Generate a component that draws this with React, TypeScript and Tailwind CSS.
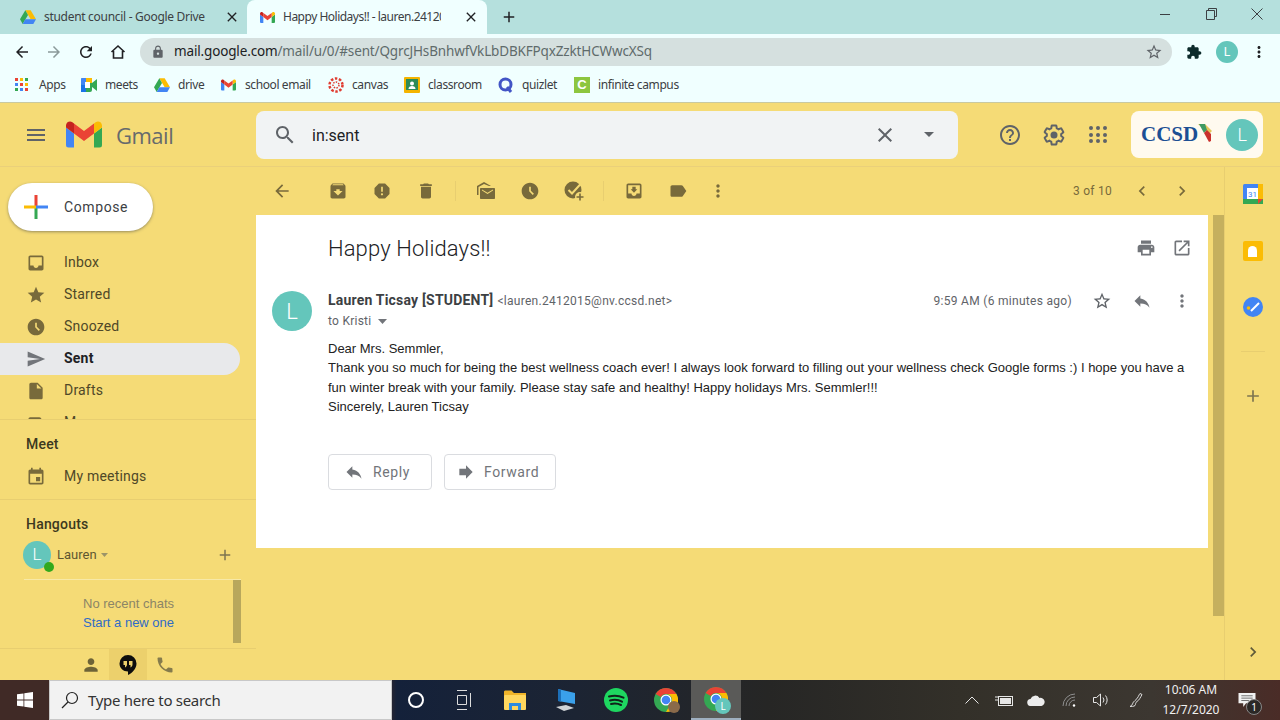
import type { ReactNode } from "react";

const P = {
  archive: "M20.54 5.23l-1.39-1.68C18.88 3.21 18.47 3 18 3H6c-.47 0-.88.21-1.16.55L3.46 5.23C3.17 5.57 3 6.02 3 6.5V19c0 1.1.9 2 2 2h14c1.1 0 2-.9 2-2V6.5c0-.48-.17-.93-.46-1.27zM12 17.5L6.5 12H10v-2h4v2h3.5L12 17.5zM5.12 5l.81-1h12l.94 1H5.12z",
  report: "M15.73 3H8.27L3 8.27v7.46L8.27 21h7.46L21 15.73V8.27L15.73 3zM12 17.3c-.72 0-1.3-.58-1.3-1.3 0-.72.58-1.3 1.3-1.3.72 0 1.3.58 1.3 1.3 0 .72-.58 1.3-1.3 1.3zm1-4.3h-2V7h2v6z",
  trash: "M6 19c0 1.1.9 2 2 2h8c1.1 0 2-.9 2-2V7H6v12zM19 4h-3.5l-1-1h-5l-1 1H5v2h14V4z",
  clock: "M11.99 2C6.47 2 2 6.48 2 12s4.47 10 9.99 10C17.52 22 22 17.52 22 12S17.52 2 11.99 2zm3.3 14.71L11 12.41V7h2v4.59l3.71 3.71-1.42 1.41z",
  moveInbox: "M19 3H5c-1.1 0-2 .9-2 2v14c0 1.1.9 2 2 2h14c1.1 0 2-.9 2-2V5c0-1.1-.9-2-2-2zm0 12h-4c0 1.66-1.35 3-3 3s-3-1.34-3-3H5V5h14v10zm-3-5h-2V7h-4v3H8l4 4 4-4z",
  label: "M17.63 5.84C17.27 5.33 16.67 5 16 5L5 5.01C3.9 5.01 3 5.9 3 7v10c0 1.1.9 1.99 2 1.99L16 19c.67 0 1.27-.33 1.63-.84L22 12l-4.37-6.16z",
  inbox: "M19 3H5c-1.1 0-2 .9-2 2v14c0 1.1.9 2 2 2h14c1.1 0 2-.9 2-2V5c0-1.1-.9-2-2-2zm0 12h-4c0 1.66-1.35 3-3 3s-3-1.34-3-3H5V5h14v10z",
  star: "M12 17.27L18.18 21l-1.64-7.03L22 9.24l-7.19-.61L12 2 9.19 8.63 2 9.24l5.46 4.73L5.82 21z",
  starBorder: "M22 9.24l-7.19-.62L12 2 9.19 8.63 2 9.24l5.46 4.73L5.82 21 12 17.27 18.18 21l-1.63-7.03L22 9.24zM12 15.4l-3.76 2.27 1-4.28-3.32-2.88 4.38-.38L12 6.1l1.71 4.04 4.38.38-3.32 2.88 1 4.28L12 15.4z",
  send: "M2.01 21L23 12 2.01 3 2 10l15 2-15 2z",
  file: "M6 2c-1.1 0-1.99.9-1.99 2L4 20c0 1.1.89 2 1.99 2H18c1.1 0 2-.9 2-2V8l-6-6H6zm7 7V3.5L18.5 9H13z",
  reply: "M10 9V5l-7 7 7 7v-4.1c5 0 8.5 1.6 11 5.1-1-5-4-10-11-11z",
  forward: "M12 8V4l8 8-8 8v-4H4V8z",
  print: "M19 8H5c-1.66 0-3 1.34-3 3v6h4v4h12v-4h4v-6c0-1.66-1.34-3-3-3zm-3 11H8v-5h8v5zm3-7c-.55 0-1-.45-1-1s.45-1 1-1 1 .45 1 1-.45 1-1 1zm-1-9H6v4h12V3z",
  openNew: "M19 19H5V5h7V3H5c-1.11 0-2 .9-2 2v14c0 1.1.89 2 2 2h14c1.1 0 2-.9 2-2v-7h-2v7zM14 3v2h3.59l-9.83 9.83 1.41 1.41L19 6.41V10h2V3h-7z",
  help: "M11 18h2v-2h-2v2zm1-16C6.48 2 2 6.48 2 12s4.48 10 10 10 10-4.48 10-10S17.52 2 12 2zm0 18c-4.41 0-8-3.59-8-8s3.59-8 8-8 8 3.59 8 8-3.59 8-8 8zm0-14c-2.21 0-4 1.79-4 4h2c0-1.1.9-2 2-2s2 .9 2 2c0 2-3 1.75-3 5h2c0-2.25 3-2.5 3-5 0-2.21-1.79-4-4-4z",
  search: "M15.5 14h-.79l-.28-.27C15.41 12.59 16 11.11 16 9.5 16 5.91 13.09 3 9.5 3S3 5.91 3 9.5 5.91 16 9.5 16c1.61 0 3.09-.59 4.23-1.57l.27.28v.79l5 4.99L20.49 19l-4.99-5zm-6 0C7.01 14 5 11.99 5 9.5S7.01 5 9.5 5 14 7.01 14 9.5 11.99 14 9.5 14z",
  event: "M17 12h-5v5h5v-5zM16 1v2H8V1H6v2H5c-1.11 0-1.99.9-1.99 2L3 19c0 1.1.89 2 2 2h14c1.1 0 2-.9 2-2V5c0-1.1-.9-2-2-2h-1V1h-2zm3 18H5V8h14v11z",
  person: "M12 12c2.21 0 4-1.79 4-4s-1.79-4-4-4-4 1.79-4 4 1.79 4 4 4zm0 2c-2.67 0-8 1.34-8 4v2h16v-2c0-2.66-5.33-4-8-4z",
  phone: "M6.62 10.79c1.44 2.83 3.76 5.14 6.59 6.59l2.2-2.2c.27-.27.67-.36 1.02-.24 1.12.37 2.33.57 3.57.57.55 0 1 .45 1 1V20c0 .55-.45 1-1 1-9.39 0-17-7.61-17-17 0-.55.45-1 1-1h3.5c.55 0 1 .45 1 1 0 1.25.2 2.45.57 3.57.11.35.03.74-.25 1.02l-2.2 2.2z",
  extension: "M20.5 11H19V7c0-1.1-.9-2-2-2h-4V3.5C13 2.12 11.88 1 10.5 1S8 2.12 8 3.5V5H4c-1.1 0-1.99.9-1.99 2v3.8H3.5c1.49 0 2.7 1.21 2.7 2.7s-1.21 2.7-2.7 2.7H2V20c0 1.1.9 2 2 2h3.8v-1.5c0-1.49 1.21-2.7 2.7-2.7 1.49 0 2.7 1.21 2.7 2.7V22H17c1.1 0 2-.9 2-2v-4h1.5c1.38 0 2.5-1.12 2.5-2.5S21.88 11 20.5 11z",
  lock: "M18 8h-1V6c0-2.76-2.24-5-5-5S7 3.24 7 6v2H6c-1.1 0-2 .9-2 2v10c0 1.1.9 2 2 2h12c1.1 0 2-.9 2-2V10c0-1.1-.9-2-2-2zm-6 9c-1.1 0-2-.9-2-2s.9-2 2-2 2 .9 2 2-.9 2-2 2zm3.1-9H8.9V6c0-1.71 1.39-3.1 3.1-3.1 1.71 0 3.1 1.39 3.1 3.1v2z",
  more: "M12 8c1.1 0 2-.9 2-2s-.9-2-2-2-2 .9-2 2 .9 2 2 2zm0 2c-1.1 0-2 .9-2 2s.9 2 2 2 2-.9 2-2-.9-2-2-2zm0 6c-1.1 0-2 .9-2 2s.9 2 2 2 2-.9 2-2-.9-2-2-2z",
  back: "M20 11H7.83l5.59-5.59L12 4l-8 8 8 8 1.41-1.41L7.83 13H20v-2z",
  close: "M19 6.41L17.59 5 12 10.59 6.41 5 5 6.41 10.59 12 5 17.59 6.41 19 12 13.41 17.59 19 19 17.59 13.41 12z",
  chevL: "M15.41 7.41L14 6l-6 6 6 6 1.41-1.41L10.83 12z",
  chevR: "M10 6L8.59 7.41 13.17 12l-4.58 4.59L10 18l6-6z",
  plus: "M19 13h-6v6h-2v-6H5v-2h6V5h2v6h6v2z",
  menu: "M3 18h18v-2H3v2zm0-5h18v-2H3v2zm0-7v2h18V6H3z",
  refresh: "M17.65 6.35C16.2 4.9 14.21 4 12 4c-4.42 0-7.99 3.58-7.99 8s3.57 8 7.99 8c3.73 0 6.84-2.55 7.73-6h-2.08c-.82 2.33-3.04 4-5.65 4-3.31 0-6-2.69-6-6s2.69-6 6-6c1.66 0 3.14.69 4.22 1.78L13 11h7V4l-2.35 2.35z",
};

function Mi({ d, size = 24, className = "" }: { d: string; size?: number; className?: string }) {
  return (
    <svg width={size} height={size} viewBox="0 0 24 24" fill="currentColor" className={`shrink-0 ${className}`}>
      <path d={d} />
    </svg>
  );
}

function GmailLogo({ w = 16, h = 12 }: { w?: number; h?: number }) {
  return (
    <svg width={w} height={h} viewBox="0 0 36 26" className="shrink-0">
      <path d="M2.5 26H8V12L0 6v17.5A2.5 2.5 0 0 0 2.5 26z" fill="#4285f4" />
      <path d="M28 26h5.500A2.500 2.500 0 0 0 36 23.500V6l-8 6z" fill="#34a853" />
      <path d="M28 2v10l8-6V4c0-3.300-3.800-5.200-6.400-3.200z" fill="#fbbc04" />
      <path d="M8 12V2l10 7.500L28 2v10l-10 7.500z" fill="#ea4335" />
      <path d="M0 4v2l8 6V2L6.400.800C3.800-1.200 0 .700 0 4z" fill="#c5221f" />
    </svg>
  );
}

function DriveLogo({ size = 16 }: { size?: number }) {
  return (
    <svg width={size} height={size} viewBox="0 0 24 22" className="shrink-0">
      <path d="M8 1h8l8 13.500h-8z" fill="#fbbc04" />
      <path d="M8 1L0 14.500 4 21.500 12 8z" fill="#34a853" />
      <path d="M8 14.500h16l-4 7H4z" fill="#4285f4" />
    </svg>
  );
}

function ChromeLogo({ size = 24 }: { size?: number }) {
  return (
    <svg width={size} height={size} viewBox="0 0 24 24" className="shrink-0">
      <circle cx="12" cy="12" r="12" fill="#34a853" />
      <path d="M12 0a12 12 0 0 1 10.400 6H12a6 6 0 0 0-5.200 3L1.600 6A12 12 0 0 1 12 0z" fill="#ea4335" />
      <path d="M22.400 6A12 12 0 0 1 12 24l5.200-9A6 6 0 0 0 12 6z" fill="#fbbc04" />
      <circle cx="12" cy="12" r="5.500" fill="#fff" />
      <circle cx="12" cy="12" r="4.300" fill="#4285f4" />
    </svg>
  );
}

function Bookmark({ icon, label, width }: { icon: ReactNode; label: string; width: string }) {
  return (
    <div className={`flex items-center shrink-0 ${width}`}>
      <span className="w-6 flex justify-start">{icon}</span>
      <span className="text-[12px] text-[#3c4043] whitespace-nowrap tracking-[-0.4px]">{label}</span>
    </div>
  );
}

function TabBar() {
  return (
    <div className="h-[34px] bg-[#b5e0dd] flex items-stretch shrink-0 font-['Noto_Sans',sans-serif]">
      <div className="w-[247px] flex items-center pl-[20px]">
        <DriveLogo />
        <span className="ml-2 text-[12px] text-[#3c4043] whitespace-nowrap tracking-[-0.3px]">student council - Google Drive</span>
        <Mi d={P.close} size={16} className="ml-auto mr-[7px] text-[#202124]" />
      </div>
      <div className="w-[240px] bg-[#f0ffff] rounded-t-[8px] flex items-center pl-[13px]">
        <GmailLogo w={15} h={11} />
        <span className="ml-2 w-[158px] overflow-hidden text-[12px] text-[#3c4043] whitespace-nowrap tracking-[-0.5px]">Happy Holidays!! - lauren.241201</span>
        <Mi d={P.close} size={16} className="ml-auto mr-2 text-[#202124]" />
      </div>
      <div className="flex items-center ml-[13px]">
        <Mi d={P.plus} size={18} className="text-[#202124]" />
      </div>
      <div className="ml-auto flex items-center pb-[6px] text-[#3c4043]">
        <div className="w-[46px] flex justify-center">
          <div className="w-[10px] h-px bg-[#3c4043]" />
        </div>
        <div className="w-[46px] flex justify-center">
          <svg width="11" height="12" viewBox="0 0 11 12" fill="none" stroke="#3c4043">
            <path d="M2.500 2.500V.500h8v8h-2M.500 2.500h8v9h-8z" />
          </svg>
        </div>
        <div className="w-[46px] flex justify-center">
          <svg width="12" height="12" viewBox="0 0 12 12" fill="none" stroke="#3c4043">
            <path d="M.500.500l11 11M11.500.500l-11 11" />
          </svg>
        </div>
      </div>
    </div>
  );
}

function AddressBar() {
  return (
    <div className="h-[36px] bg-[#f0ffff] flex items-center shrink-0 font-['Noto_Sans',sans-serif]">
      <div className="w-[140px] flex items-center text-[#202124]">
        <div className="w-[44px] flex justify-center"><Mi d={P.back} size={18} /></div>
        <div className="w-[20px] flex justify-center"><Mi d="M4 13h12.170l-5.590 5.590L12 20l8-8-8-8-1.410 1.410L16.170 11H4z" size={18} className="text-[#8b9a9a]" /></div>
        <div className="w-[44px] flex justify-center"><Mi d={P.refresh} size={18} /></div>
        <div className="w-[20px] flex justify-center">
          <svg width="16" height="16" viewBox="0 0 16 16" fill="none" stroke="#202124" strokeWidth="1.600">
            <path d="M1.500 8L8 2l6.500 6M3.500 7v7h9V7" />
          </svg>
        </div>
      </div>
      <div className="w-[1032px] h-[28px] bg-[#d5e0df] rounded-full flex items-center pl-[11px] pr-[9px]">
        <Mi d={P.lock} size={14} className="text-[#5f6368]" />
        <span className="ml-[9px] -mt-[1px] text-[13.5px] text-[#5f6b6b] whitespace-nowrap tracking-[-0.15px]">
          <span className="text-[#202124]">mail.google.com</span>/mail/u/0/#sent/QgrcJHsBnhwfVkLbDBKFPqxZzktHCWwcXSq
        </span>
        <Mi d={P.starBorder} size={18} className="ml-auto text-[#5f6368]" />
      </div>
      <Mi d={P.extension} size={16} className="ml-[14px] text-[#0c2b2b]" />
      <div className="ml-[14px] w-[22px] h-[22px] rounded-full bg-[#64c6bb] text-white text-[13px] flex items-center justify-center">L</div>
      <Mi d={P.more} size={18} className="ml-[12px] text-[#202124]" />
    </div>
  );
}

function BookmarksBar() {
  const dots = ["#ea4335", "#fbbc04", "#34a853", "#4285f4", "#ea4335", "#fbbc04", "#34a853", "#4285f4", "#ea4335"];
  return (
    <div className="h-[33px] bg-[#f0ffff] border-b border-[#c9c9a0] flex items-center pl-[15px] pb-[3px] shrink-0 font-['Noto_Sans',sans-serif]">
      <Bookmark
        width="w-[66px]"
        label="Apps"
        icon={
          <span className="grid grid-cols-3 gap-[2px]">
            {dots.map((c, i) => (
              <span key={i} className="w-[3px] h-[3px]" style={{ background: c }} />
            ))}
          </span>
        }
      />
      <Bookmark
        width="w-[73px]"
        label="meets"
        icon={
          <svg width="16" height="14" viewBox="0 0 16 14">
            <rect width="11" height="14" rx="2" fill="#34a853" />
            <rect width="6" height="7" rx="1" fill="#4285f4" />
            <rect y="7" width="5" height="7" fill="#1a73e8" />
            <rect x="5" y="0" width="6" height="5" fill="#fbbc04" />
            <rect x="4" y="4" width="5" height="6" fill="#fff" />
            <path d="M11 5l5-4v12l-5-4z" fill="#34a853" />
          </svg>
        }
      />
      <Bookmark width="w-[67px]" label="drive" icon={<DriveLogo />} />
      <Bookmark width="w-[107px]" label="school email" icon={<GmailLogo w={15} h={12} />} />
      <Bookmark
        width="w-[76px]"
        label="canvas"
        icon={
          <svg width="16" height="16" viewBox="0 0 16 16" fill="none" stroke="#e03c31">
            <circle cx="8" cy="8" r="6.500" strokeWidth="2.500" strokeDasharray="2.500 1.600" />
            <circle cx="8" cy="8" r="3" strokeWidth="1.500" strokeDasharray="1.500 1.200" />
          </svg>
        }
      />
      <Bookmark
        width="w-[94px]"
        label="classroom"
        icon={
          <svg width="16" height="16" viewBox="0 0 16 16">
            <rect width="16" height="16" rx="1" fill="#f4b400" />
            <rect x="2" y="2" width="12" height="11" fill="#2e8b57" />
            <circle cx="8" cy="6.500" r="2" fill="#fff" />
            <path d="M4.500 12c0-2 1.500-3 3.500-3s3.500 1 3.500 3z" fill="#fff" />
          </svg>
        }
      />
      <Bookmark
        width="w-[76px]"
        label="quizlet"
        icon={
          <svg width="16" height="16" viewBox="0 0 16 16" fill="none" stroke="#4255c6" strokeWidth="3">
            <circle cx="7.500" cy="7.500" r="5.500" />
            <path d="M9 10l4 5" />
          </svg>
        }
      />
      <Bookmark
        width="w-[120px]"
        label="infinite campus"
        icon={
          <span className="w-4 h-4 bg-[#8dc63f] text-white text-[13px] font-bold leading-4 text-center font-['Liberation_Sans',sans-serif]">C</span>
        }
      />
    </div>
  );
}

function GmailHeader() {
  return (
    <div className="h-[64px] border-b border-[#ead07a] flex items-center shrink-0">
      <div className="w-[256px] flex items-center pl-[24px]">
        <Mi d={P.menu} size={24} className="text-[#5f6368]" />
        <div className="ml-[18px]"><GmailLogo w={36} h={27} /></div>
        <span className="ml-[14px] text-[22px] text-[#666a6c] font-['Open_Sans',sans-serif] leading-none tracking-[-0.5px]">Gmail</span>
      </div>
      <div className="w-[702px] h-[48px] bg-[#f1f3f4] rounded-[8px] flex items-center pl-[17px]">
        <Mi d={P.search} size={24} className="text-[#5f6368]" />
        <span className="ml-[15px] mt-[2px] text-[16px] text-[#202124]">in:sent</span>
        <Mi d={P.close} size={24} className="ml-auto text-[#5f6368]" />
        <svg width="10" height="5" viewBox="0 0 10 5" className="ml-[27px] mr-[24px]"><path d="M0 0h10L5 5z" fill="#5f6368" /></svg>
      </div>
      <div className="ml-[40px] flex items-center text-[#5f6368]">
        <Mi d={P.help} size={24} />
        <svg width="24" height="24" viewBox="0 0 24 24" className="ml-[20px]">
          <path
            d="M19.140 12.940c.04-.3.06-.61.06-.94 0-.32-.02-.64-.07-.94l2.030-1.580c.18-.14.23-.41.12-.61l-1.920-3.320c-.12-.22-.37-.29-.59-.22l-2.390.96c-.5-.38-1.030-.7-1.620-.94l-.36-2.540c-.04-.24-.24-.41-.48-.41h-3.840c-.24 0-.43.17-.47.41l-.36 2.540c-.59.24-1.130.57-1.620.94l-2.390-.96c-.22-.08-.47 0-.59.22L2.740 8.870c-.12.21-.08.47.12.61l2.030 1.580c-.05.3-.09.63-.09.94s.02.64.07.94l-2.030 1.580c-.18.14-.23.41-.12.61l1.920 3.320c.12.22.37.29.59.22l2.390-.96c.5.38 1.030.7 1.620.94l.36 2.540c.05.24.24.41.48.41h3.840c.24 0 .44-.17.47-.41l.36-2.540c.59-.24 1.130-.56 1.620-.94l2.390.96c.22.08.47 0 .59-.22l1.920-3.320c.12-.22.07-.47-.12-.61l-2.010-1.580z"
            fill="none"
            stroke="#5f6368"
            strokeWidth="2"
          />
          <circle cx="12" cy="12" r="3.500" fill="#5f6368" />
        </svg>
        <span className="ml-[23px] w-[18px] grid grid-cols-3 gap-[2.500px]">
          {[0, 1, 2, 3, 4, 5, 6, 7, 8].map((i) => (
            <span key={i} className="w-[4px] h-[4px] rounded-full bg-[#5f6368]" />
          ))}
        </span>
      </div>
      <div className="ml-[24px] w-[132px] h-[47px] bg-[#fffaef] rounded-[8px] flex items-center pl-[10px]">
        <span className="font-['Liberation_Serif',serif] font-bold text-[21px] text-[#1c4f94] leading-none">CCSD</span>
        <svg width="14" height="20" viewBox="0 0 14 20" className="-mt-1">
          <path d="M0 1h7l7 7-3 3z" fill="#e6c65a" />
          <path d="M1 1h6l2 6-3 3z" fill="#3f9a63" />
          <path d="M6 10l3-3 4 4v7l-2 1z" fill="#c9302c" />
        </svg>
        <div className="ml-[14px] w-[32px] h-[32px] rounded-full bg-[#64c6bb] text-white text-[18px] font-light flex items-center justify-center">L</div>
      </div>
    </div>
  );
}

function NavItem({ d, label, active }: { d: string; label: string; active?: boolean }) {
  return (
    <div className={`h-[32px] w-[240px] flex items-center pl-[26px] rounded-r-full shrink-0 ${active ? "bg-[#e8e9eb]" : ""}`}>
      <Mi d={d} size={20} className={active ? "text-[#72757a]" : "text-[#786a3b]"} />
      <span className={`ml-[18px] -mt-[2px] text-[14px] tracking-[0.2px] ${active ? "font-bold text-[#202124]" : "text-[#4f4828]"}`}>{label}</span>
    </div>
  );
}

function Sidebar() {
  return (
    <div className="w-[256px] flex flex-col shrink-0">
      <div className="h-[80px] pt-[16px] pl-[8px] shrink-0">
        <div className="w-[145px] h-[48px] rounded-full bg-white shadow-[0_1px_3px_rgba(60,64,67,0.5)] flex items-center pl-[16px]">
          <svg width="24" height="24" viewBox="0 0 24 24">
            <rect x="10.500" y="0" width="3" height="12" fill="#ea4335" />
            <rect x="10.500" y="12" width="3" height="12" fill="#34a853" />
            <rect x="0" y="10.500" width="12" height="3" fill="#fbbc04" />
            <rect x="12" y="10.500" width="12" height="3" fill="#4285f4" />
          </svg>
          <span className="ml-[16px] text-[14px] text-[#3c4043] tracking-[0.6px]">Compose</span>
        </div>
      </div>
      <div className="h-[172px] overflow-hidden shrink-0 flex flex-col">
        <NavItem d={P.inbox} label="Inbox" />
        <NavItem d={P.star} label="Starred" />
        <NavItem d={P.clock} label="Snoozed" />
        <NavItem d={P.send} label="Sent" active />
        <NavItem d={P.file} label="Drafts" />
        <NavItem d={P.label} label="More" />
      </div>
      <div className="h-[80px] border-t border-[#e8ce70] pl-[26px] shrink-0">
        <div className="mt-[15px] text-[14px] font-medium text-[#3c3820] leading-[18px] tracking-[0.2px]">Meet</div>
        <div className="mt-[13px] flex items-center">
          <Mi d={P.event} size={20} className="text-[#786a3b]" />
          <span className="ml-[18px] text-[14px] text-[#4f4828] tracking-[0.2px]">My meetings</span>
        </div>
      </div>
      <div className="h-[149px] border-t border-[#e8ce70] flex flex-col shrink-0">
        <div className="mt-[15px] pl-[26px] text-[14px] font-medium text-[#3c3820] leading-[18px] tracking-[0.2px]">Hangouts</div>
        <div className="mt-[5px] h-[34px] ml-[23px] mr-[22px] flex items-center relative">
          <div className="w-[28px] h-[28px] rounded-full bg-[#64c6bb] text-white text-[17px] font-light flex items-center justify-center">L</div>
          <span className="absolute left-[21px] top-[24px] w-[10px] h-[10px] rounded-full bg-[#32a91c]" />
          <span className="ml-[6px] text-[13px] text-[#5e5731]">Lauren</span>
          <svg width="7" height="4" viewBox="0 0 7 4" className="ml-[4px]"><path d="M0 0h7L3.500 4z" fill="#9c9468" /></svg>
          <Mi d={P.plus} size={18} className="ml-auto text-[#7d7550]" />
        </div>
        <div className="mt-[7px] ml-[24px] w-[217px] h-[69px] border-t border-[#f7e9a8] flex justify-between">
          <div className="flex-1 pt-[14px] pl-[59px]">
            <div className="font-['Liberation_Sans',sans-serif] text-[13px] leading-[20px] text-[#8b8566] whitespace-nowrap">No recent chats</div>
            <div className="font-['Liberation_Sans',sans-serif] text-[13px] leading-[18px] text-[#2f6bc6] whitespace-nowrap">Start a new one</div>
          </div>
          <div className="w-[8px] h-[63px] bg-[#b8a75c]" />
        </div>
      </div>
      <div className="h-[32px] border-t border-[#e8ce70] flex items-center pl-[71px] shrink-0">
        <div className="w-[38px] flex justify-center pl-[2px]"><Mi d={P.person} size={20} className="text-[#6d6337]" /></div>
        <div className="w-[38px] h-full bg-[#ecd06c] flex items-center justify-center">
          <svg width="20" height="22" viewBox="0 0 20 22">
            <path d="M10 1a8.500 8.500 0 0 0-8.500 8.500c0 4.700 3.800 8 8.500 8v3.500c4-2 8.500-6 8.500-11.500A8.500 8.500 0 0 0 10 1z" fill="#0d0d0d" />
            <path d="M5.500 7h3.500v3.500c0 1.400-.9 2.500-2 2.900V11H5.500zM11 7h3.500v3.500c0 1.400-.9 2.500-2 2.900V11H11z" fill="#ecd06c" />
          </svg>
        </div>
        <div className="w-[38px] flex justify-center pr-[2px]"><Mi d={P.phone} size={20} className="text-[#857b4c]" /></div>
      </div>
    </div>
  );
}

function ToolBtn({ d, className = "" }: { d: string; className?: string }) {
  return (
    <div className={`w-[44px] flex justify-center shrink-0 ${className}`}>
      <Mi d={d} size={20} className="text-[#786a3b]" />
    </div>
  );
}

function MailToolbar() {
  return (
    <div className="h-[48px] flex items-center pl-[4px] shrink-0">
      <ToolBtn d={P.back} />
      <ToolBtn d={P.archive} className="ml-[12px]" />
      <ToolBtn d={P.report} />
      <ToolBtn d={P.trash} />
      <div className="ml-[7px] w-px h-[20px] bg-[#e8ce70]" />
      <div className="ml-[8px] w-[44px] flex justify-center">
        <svg width="20" height="20" viewBox="0 0 20 20" fill="#786a3b">
          <path d="M1 5l7-4 7 4h-2L8 3 2.500 6v8H1z" />
          <path d="M5 7h13c.6 0 1 .4 1 1v9c0 .6-.4 1-1 1H5c-.6 0-1-.4-1-1V8c0-.6.4-1 1-1zm1 2.500l5.500 3.500L17 9.500V8.500l-5.500 3.200L6 8.500z" />
        </svg>
      </div>
      <ToolBtn d={P.clock} />
      <div className="w-[44px] flex justify-center">
        <svg width="22" height="22" viewBox="0 0 22 22">
          <circle cx="10" cy="10" r="8.500" fill="#786a3b" />
          <path d="M5.500 10l3.500 3.500L18.500 3" fill="none" stroke="#f5db76" strokeWidth="2" />
          <circle cx="17" cy="17" r="5" fill="#f5db76" />
          <path d="M16.200 13.500h1.600v2.700h2.700v1.600h-2.700v2.700h-1.600v-2.700h-2.700v-1.600h2.700z" fill="#786a3b" />
        </svg>
      </div>
      <div className="ml-[7px] w-px h-[20px] bg-[#e8ce70]" />
      <ToolBtn d={P.moveInbox} className="ml-[8px]" />
      <ToolBtn d={P.label} />
      <ToolBtn d={P.more} className="-ml-[4px]" />
      <span className="ml-auto text-[12px] text-[#786a3b] tracking-[0.25px]">3 of 10</span>
      <div className="ml-[8px] w-[44px] flex justify-center"><Mi d={P.chevL} size={20} className="text-[#786a3b]" /></div>
      <div className="mr-[24px] w-[36px] flex justify-center"><Mi d={P.chevR} size={20} className="text-[#786a3b]" /></div>
    </div>
  );
}

function MessageCard() {
  return (
    <div className="w-[952px] h-[333px] bg-white shrink-0 flex flex-col">
      <div className="h-[66px] flex items-center pl-[72px] pr-[16px] shrink-0">
        <h1 className="text-[22px] font-light text-[#202124] tracking-[0.12px] font-['Roboto',sans-serif]">Happy Holidays!!</h1>
        <Mi d={P.print} size={20} className="ml-auto text-[#72757a]" />
        <Mi d={P.openNew} size={20} className="ml-[16px] text-[#72757a]" />
      </div>
      <div className="flex pl-[16px] pt-[10px] h-[58px] shrink-0">
        <div className="w-[40px] h-[40px] rounded-full bg-[#64c6bb] text-white text-[22px] font-light flex items-center justify-center">L</div>
        <div className="ml-[16px] flex-1">
          <div className="flex items-center h-[19px]">
            <span className="text-[14px] font-bold text-[#3c4043] tracking-[0.2px]">Lauren Ticsay [STUDENT]</span>
            <span className="ml-[4px] text-[12px] text-[#5f6368] tracking-[0.28px]">&lt;lauren.2412015@nv.ccsd.net&gt;</span>
            <span className="ml-auto text-[12px] text-[#5f6368] tracking-[0.3px]">9:59 AM (6 minutes ago)</span>
            <Mi d={P.starBorder} size={20} className="ml-[20px] text-[#5f6368]" />
            <Mi d={P.reply} size={20} className="ml-[20px] text-[#72757a]" />
            <Mi d={P.more} size={20} className="ml-[20px] mr-[16px] text-[#72757a]" />
          </div>
          <div className="flex items-center h-[22px]">
            <span className="text-[12px] text-[#5f6368] tracking-[0.25px]">to Kristi</span>
            <svg width="9" height="5" viewBox="0 0 9 5" className="ml-[7px]"><path d="M0 0h9L4.500 5z" fill="#72757a" /></svg>
          </div>
        </div>
      </div>
      <div className="pl-[72px] pr-[20px] font-['Liberation_Sans',sans-serif] text-[13px] leading-[19.300px] text-[#222222]">
        <div>Dear Mrs. Semmler,</div>
        <div>Thank you so much for being the best wellness coach ever! I always look forward to filling out your wellness check Google forms :) I hope you have a fun winter break with your family. Please stay safe and healthy! Happy holidays Mrs. Semmler!!!</div>
        <div>Sincerely, Lauren Ticsay</div>
      </div>
      <div className="mt-[38px] pl-[72px] flex gap-[12px]">
        <div className="w-[104px] h-[36px] rounded-[4px] border border-[#dadce0] flex items-center pl-[15px] text-[#72757a]">
          <Mi d={P.reply} size={20} />
          <span className="ml-[9px] text-[14px] tracking-[0.6px]">Reply</span>
        </div>
        <div className="w-[112px] h-[36px] rounded-[4px] border border-[#dadce0] flex items-center pl-[11px] text-[#72757a]">
          <Mi d={P.forward} size={20} />
          <span className="ml-[8px] text-[14px] tracking-[0.6px]">Forward</span>
        </div>
      </div>
    </div>
  );
}

function SidePanel() {
  return (
    <div className="w-[56px] border-l border-[#e8ce70] flex flex-col items-center pt-[17px] shrink-0">
      <svg width="20" height="20" viewBox="0 0 20 20">
        <rect width="20" height="20" rx="1.500" fill="#4285f4" />
        <rect y="15" width="20" height="5" fill="#34a853" />
        <rect x="15" width="5" height="15" fill="#fbbc04" />
        <path d="M15 20l5-5h-5z" fill="#ea4335" />
        <rect x="4" y="4" width="11" height="11" fill="#fff" />
        <text x="9.500" y="13" fontSize="8" textAnchor="middle" fill="#4285f4" fontFamily="Roboto">31</text>
      </svg>
      <div className="mt-[37px] w-[20px] h-[20px] rounded-[2px] bg-[#fbbc04] flex items-center justify-center">
        <span className="w-[9px] h-[11px] rounded-t-full rounded-b-[3px] bg-white" />
      </div>
      <div className="mt-[36px] w-[20px] h-[20px] rounded-full bg-[#4285f4] flex items-center justify-center">
        <svg width="14" height="10" viewBox="0 0 14 10" fill="none">
          <path d="M5 9l8-8" stroke="#fff" strokeWidth="2" />
          <circle cx="2.500" cy="6" r="1.800" fill="#fbbc04" />
        </svg>
      </div>
      <div className="mt-[34px] w-[24px] h-px bg-[#e8ce70]" />
      <Mi d={P.plus} size={20} className="mt-[34px] text-[#7d7550]" />
      <Mi d={P.chevR} size={20} className="mt-auto mb-[18px] text-[#5f5a3a]" />
    </div>
  );
}

function Taskbar() {
  return (
    <div className="h-[40px] shrink-0 flex items-stretch bg-[linear-gradient(90deg,#402a26_0%,#3f2a26_30%,#14213a_31%,#1c2433_45%,#262625_60%,#333029_75%,#3c3731_90%,#4a2c27_100%)] font-['Noto_Sans',sans-serif]">
      <div className="w-[49px] flex items-center justify-center">
        <svg width="16" height="16" viewBox="0 0 16 16" fill="#fff">
          <path d="M0 2.300l6.500-.9v6.200H0zM7.300 1.300L16 0v7.600H7.300zM0 8.400h6.500v6.200L0 13.700zM7.300 8.400H16V16l-8.700-1.300z" />
        </svg>
      </div>
      <div className="w-[343px] bg-[#f2f2f2] border border-[#c8c8c8] flex items-center pl-[11px]">
        <svg width="18" height="18" viewBox="0 0 18 18" fill="none" stroke="#222" strokeWidth="1.200">
          <circle cx="11" cy="7" r="5.500" />
          <path d="M7 11l-6 6" />
        </svg>
        <span className="ml-[9px] text-[15px] text-[#333333] tracking-[-0.3px]">Type here to search</span>
      </div>
      <div className="w-[48px] flex items-center justify-center">
        <span className="w-[16px] h-[16px] rounded-full border-[2.500px] border-white" />
      </div>
      <div className="w-[48px] flex items-center justify-center">
        <svg width="17" height="20" viewBox="0 0 17 20" fill="none" stroke="#dcdcdc">
          <path d="M1 .5h10M1 19.500h10M1.500 5.500h9v9h-9zM14.500 3v14" />
        </svg>
      </div>
      <div className="w-[53px] flex items-center justify-center">
        <svg width="22" height="20" viewBox="0 0 22 20">
          <path d="M0 2c0-1 .6-1.500 1.500-1.500h6L10 3h12v3H0z" fill="#f0b429" />
          <rect y="5" width="22" height="15" rx="1" fill="#ffd75e" />
          <rect x="5" y="13" width="12" height="7" fill="#2c8be0" />
          <rect x="8" y="16" width="6" height="4" fill="#ffd75e" />
        </svg>
      </div>
      <div className="w-[50px] flex items-center justify-center">
        <svg width="22" height="26" viewBox="0 0 22 26">
          <path d="M3 2l17 4v11L3 14z" fill="#3aa0ea" />
          <path d="M3 2l3 .7v11.800L3 14z" fill="#1c6fb8" />
          <path d="M1 20l10-2 8 3-10 3z" fill="#cfd3d6" />
        </svg>
      </div>
      <div className="w-[50px] flex items-center justify-center">
        <svg width="24" height="24" viewBox="0 0 24 24">
          <circle cx="12" cy="12" r="12" fill="#1ed760" />
          <path d="M5 8.500c5-1.400 10-1 14.500 1.200M6 12.500c4-1 8.500-.8 12 1.200M7 16c3.500-.8 7-.6 10 1" fill="none" stroke="#10231a" strokeWidth="2" strokeLinecap="round" />
        </svg>
      </div>
      <div className="w-[50px] flex items-center justify-center relative">
        <ChromeLogo />
        <span className="absolute left-[27px] top-[21px] w-[12px] h-[12px] rounded-full bg-[#8a6a4a]" />
      </div>
      <div className="w-[50px] bg-[#5a5a58] flex items-center justify-center relative border-b-2 border-[#9fb0c0]">
        <ChromeLogo />
        <span className="absolute left-[24px] top-[18px] w-[16px] h-[16px] rounded-full bg-[#64c6bb] text-white text-[10px] flex items-center justify-center">L</span>
      </div>
      <div className="flex-1 flex items-center justify-end text-white">
        <svg width="14" height="8" viewBox="0 0 14 8" fill="none" stroke="#e6e6e6" className="mr-[16px]"><path d="M.5 7.500L7 1l6.500 6.500" /></svg>
        <svg width="18" height="12" viewBox="0 0 18 12" className="mr-[14px]">
          <path d="M0 3h3M0 6h3" stroke="#e6e6e6" fill="none" />
          <rect x="3.500" y="2.500" width="14" height="9" fill="none" stroke="#e6e6e6" />
          <rect x="5" y="4" width="11" height="6" fill="#e6e6e6" />
        </svg>
        <svg width="18" height="11" viewBox="0 0 18 11" className="mr-[17px]">
          <path d="M4 11a3.500 3.500 0 0 1-.5-7A5 5 0 0 1 12.500 3 4 4 0 0 1 14.500 11z" fill="#ececec" />
        </svg>
        <svg width="14" height="14" viewBox="0 0 14 14" fill="none" stroke="#8f8f8f" className="mr-[17px]">
          <path d="M1 13a12 12 0 0 1 12-12M4 13a9 9 0 0 1 9-9M7 13a6 6 0 0 1 6-6" />
          <circle cx="12" cy="12.500" r="1.200" fill="#fff" stroke="none" />
        </svg>
        <svg width="16" height="14" viewBox="0 0 16 14" fill="none" stroke="#e6e6e6" className="mr-[20px]">
          <path d="M.5 4.500h3l4-3.500v12l-4-3.500h-3zM10 4.500a4 4 0 0 1 0 5M12.500 2.500a7 7 0 0 1 0 9" />
        </svg>
        <svg width="14" height="16" viewBox="0 0 14 16" fill="none" stroke="#dcdcdc" className="mr-[16px]">
          <path d="M1 14.500c3-1 2-4 5-6s4-6 5-7l2 1c-1 2-3 6-5 7s-1 3-2 4-4 1-5 1z" />
        </svg>
        <div className="w-[64px] text-center text-[12px] leading-[20px] text-[#f0f0f0] shrink-0">
          <div>10:06 AM</div>
          <div>12/7/2020</div>
        </div>
        <div className="w-[43px] h-full ml-[14px] pt-[12px] pl-[1px] relative shrink-0">
          <svg width="18" height="17" viewBox="0 0 18 18">
            <path d="M0 1h18v11H8l-3 4v-4H0z" fill="#f2f2f2" />
            <path d="M3 4h12M3 6.500h12M3 9h8" stroke="#6a6a6a" />
          </svg>
          <span className="absolute left-[9px] top-[19px] w-[16px] h-[16px] rounded-full bg-[#2b2826] border border-[#888888] text-white text-[10px] flex items-center justify-center">1</span>
        </div>
      </div>
    </div>
  );
}

export default function App() {
  return (
    <div className="w-[1280px] h-[720px] overflow-hidden flex flex-col font-['Roboto',sans-serif]">
      <TabBar />
      <AddressBar />
      <BookmarksBar />
      <div className="flex-1 min-h-0 bg-[#f5db76] flex flex-col">
        <GmailHeader />
        <div className="flex-1 min-h-0 flex">
          <Sidebar />
          <div className="flex-1 min-w-0 flex flex-col">
            <MailToolbar />
            <div className="flex gap-[5px]">
              <MessageCard />
              <div className="w-[11px] h-[401px] bg-[#c5b05e]" />
            </div>
          </div>
          <SidePanel />
        </div>
      </div>
      <Taskbar />
    </div>
  );
}
